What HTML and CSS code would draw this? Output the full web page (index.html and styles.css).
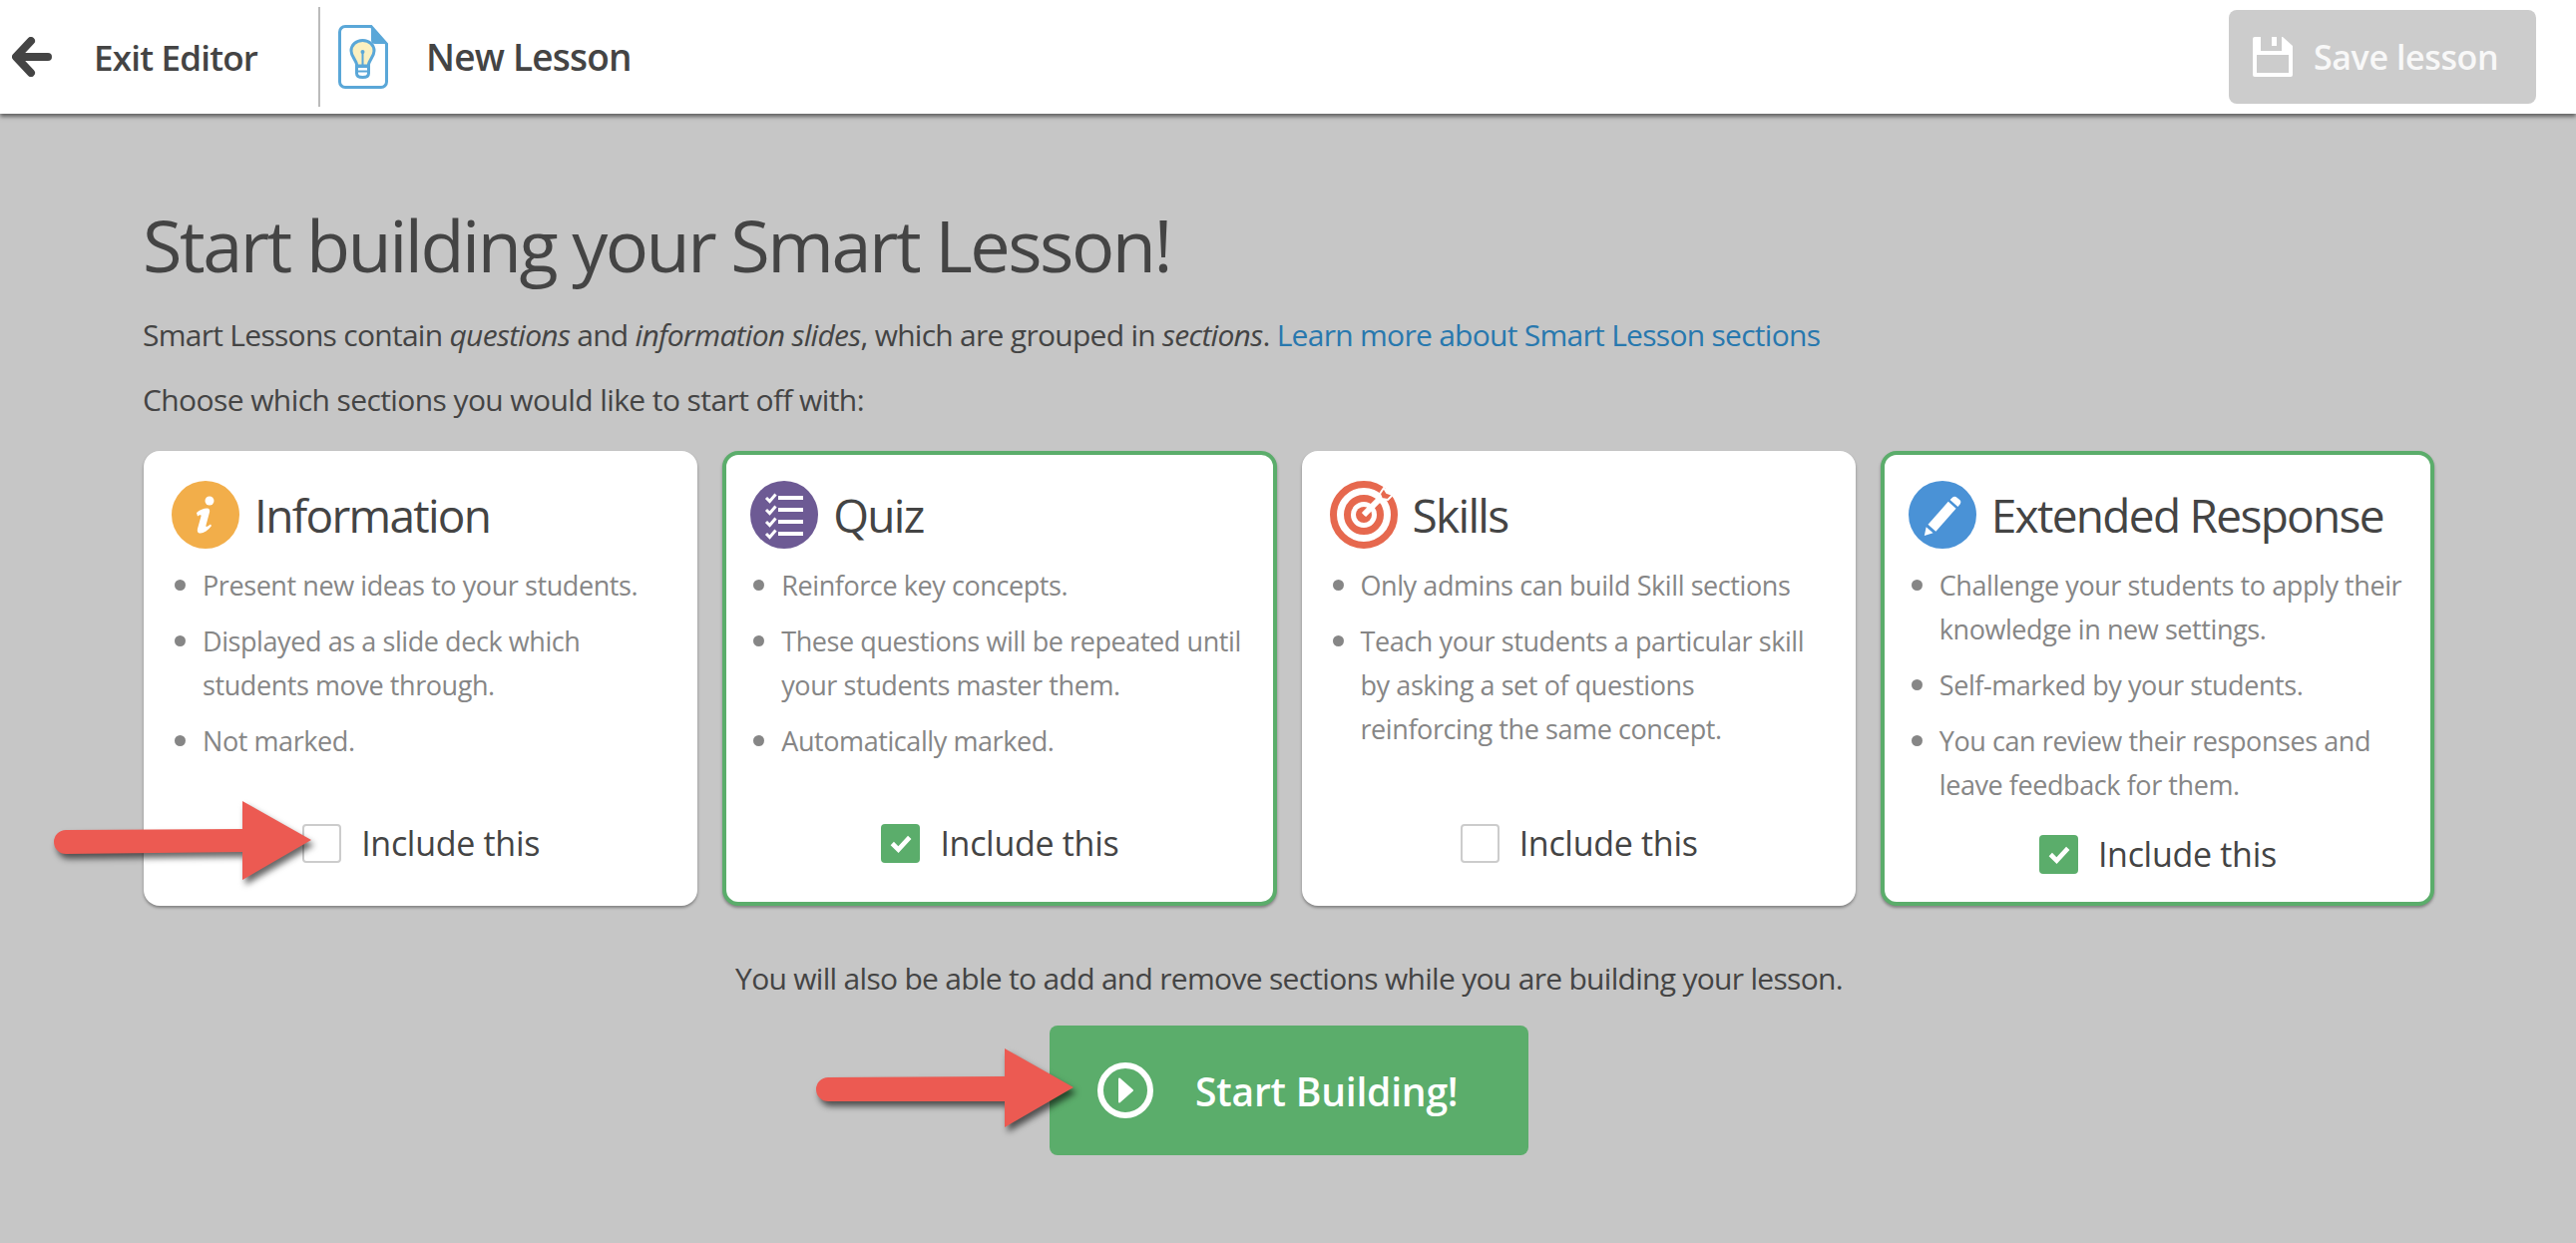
FILE: index.html
```html
<!DOCTYPE html>
<html lang="en">
<head>
    <meta charset="UTF-8">
    <title>New Lesson</title>
    <link rel="stylesheet" href="styles.css">
</head>
<body>
    <header class="topbar">
        <a class="exit-link" href="#">
            <svg class="exit-icon" viewBox="0 0 40 40"><path d="M19 4 4 20l15 16M5 20h31" fill="none" stroke="#444" stroke-width="8" stroke-linecap="round" stroke-linejoin="round"/></svg>
            <span>Exit Editor</span>
        </a>
        <div class="topbar-divider"></div>
        <svg class="doc-icon" viewBox="0 0 50 64">
            <path d="M7 1.500h26L48.500 19v38a5.500 5.500 0 0 1-5.500 5.500H7A5.500 5.500 0 0 1 1.500 57V7A5.500 5.500 0 0 1 7 1.500z" fill="#fff" stroke="#5aa7d8" stroke-width="3"/>
            <path d="M33 1.500 48.500 19H37a4 4 0 0 1-4-4z" fill="#5aa7d8"/>
            <path d="M24.500 15.500c-7 0-11.500 5-11.500 10.500 0 6 5 8.500 6 15h11c1-6.500 6-9 6-15 0-5.500-4.500-10.500-11.500-10.500z" fill="#fbf0c0" stroke="#5aa7d8" stroke-width="3"/>
            <path d="M24.500 27v14" stroke="#5aa7d8" stroke-width="2"/>
            <circle cx="24.500" cy="27" r="2" fill="#5aa7d8"/>
            <path d="M18.500 41.500h12v7c0 2.500-2.500 4-6 4s-6-1.500-6-4z" fill="#fff" stroke="#5aa7d8" stroke-width="3"/>
            <path d="M18.500 46.500h12" stroke="#5aa7d8" stroke-width="2"/>
        </svg>
        <h1 class="lesson-name">New Lesson</h1>
        <button class="save-btn" type="button">
            <svg class="save-icon" viewBox="0 0 40 40"><path fill-rule="evenodd" d="M2 0h28l10 9v29a2 2 0 0 1-2 2H2a2 2 0 0 1-2-2V2a2 2 0 0 1 2-2zm2 18v18h32V18zM8 0v14h21V0h-5v9h-5V0z" fill="#fff"/></svg>
            <span>Save lesson</span>
        </button>
    </header>

    <main class="content">
        <h2 class="page-title">Start building your Smart Lesson!</h2>
        <p class="intro">Smart Lessons contain <em>questions</em> and <em>information slides</em>, which are grouped in <em>sections</em>. <a href="#">Learn more about Smart Lesson sections</a></p>
        <p class="intro intro-choose">Choose which sections you would like to start off with:</p>

        <div class="cards">
            <section class="card">
                <div class="card-head">
                    <svg class="card-icon" viewBox="0 0 68 68">
                        <circle cx="34" cy="34" r="34" fill="#f2ae4a"/>
                        <circle cx="38" cy="20" r="4.500" fill="#fff"/>
                        <path d="M25 32c3-3 7-4.500 10.500-4.500 2.500 0 3 2 2.500 4l-3.500 13c-.5 2 1 2 4.500-1l1 1.500c-3 4.500-8 7.500-11 7.500-3 0-3.500-2-3-4.500l3.500-12.500c.5-2-1.500-1.500-3.500 0z" fill="#fff"/>
                    </svg>
                    <h3>Information</h3>
                </div>
                <ul class="card-points">
                    <li>Present new ideas to your students.</li>
                    <li>Displayed as a slide deck which students move through.</li>
                    <li>Not marked.</li>
                </ul>
                <label class="include">
                    <span class="checkbox"></span>
                    Include this
                </label>
            </section>

            <section class="card card-on">
                <div class="card-head">
                    <svg class="card-icon" viewBox="0 0 68 68">
                        <circle cx="34" cy="34" r="34" fill="#6d5a94"/>
                        <path d="M28 17h25M28 29h25M28 41h25M28 53h25" stroke="#fff" stroke-width="4" fill="none"/>
                        <path d="M16 17l3.500 3.500 6-7M16 29l3.500 3.500 6-7M16 41l3.500 3.500 6-7M16 53l3.500 3.500 6-7" stroke="#fff" stroke-width="3" fill="none"/>
                    </svg>
                    <h3>Quiz</h3>
                </div>
                <ul class="card-points">
                    <li>Reinforce key concepts.</li>
                    <li>These questions will be repeated until your students master them.</li>
                    <li>Automatically marked.</li>
                </ul>
                <label class="include">
                    <span class="checkbox checkbox-on">
                        <svg viewBox="0 0 38 38"><path d="M11 19l6 6 11-12" fill="none" stroke="#fff" stroke-width="4.500"/></svg>
                    </span>
                    Include this
                </label>
            </section>

            <section class="card">
                <div class="card-head">
                    <svg class="card-icon" viewBox="0 0 68 68">
                        <circle cx="34" cy="34" r="30.500" fill="none" stroke="#e6684e" stroke-width="7"/>
                        <circle cx="34" cy="34" r="16.500" fill="none" stroke="#e6684e" stroke-width="7"/>
                        <circle cx="34" cy="34" r="8" fill="#e6684e"/>
                        <path d="M34 34 60 8" stroke="#fff" stroke-width="6"/>
                        <path d="M34 34 50 18" stroke="#fff" stroke-width="4"/>
                        <path d="M50 13l4-6 3 5 6 2-5 5-6-1z" fill="#e6684e" stroke="#fff" stroke-width="2"/>
                    </svg>
                    <h3>Skills</h3>
                </div>
                <ul class="card-points">
                    <li>Only admins can build Skill sections</li>
                    <li>Teach your students a particular skill by asking a set of questions reinforcing the same concept.</li>
                </ul>
                <label class="include">
                    <span class="checkbox"></span>
                    Include this
                </label>
            </section>

            <section class="card card-on">
                <div class="card-head">
                    <svg class="card-icon" viewBox="0 0 68 68">
                        <circle cx="34" cy="34" r="34" fill="#4a92d6"/>
                        <g transform="translate(2.500 2) scale(.92)">
                            <path d="M45 16c1.500-1.500 3.500-1.500 5 0l3 2.500c1.500 1.500 1.500 3 .5 4.500l-2.500 3-8.500-7.500z" fill="#fff"/>
                            <path d="M40.500 20.500l8.500 7.500-22 25-8.500-7.500z" fill="#fff"/>
                            <path d="M16.500 48l7.500 6.500-9.500 3z" fill="#fff"/>
                        </g>
                    </svg>
                    <h3>Extended Response</h3>
                </div>
                <ul class="card-points">
                    <li>Challenge your students to apply their knowledge in new settings.</li>
                    <li>Self-marked by your students.</li>
                    <li>You can review their responses and leave feedback for them.</li>
                </ul>
                <label class="include">
                    <span class="checkbox checkbox-on">
                        <svg viewBox="0 0 38 38"><path d="M11 19l6 6 11-12" fill="none" stroke="#fff" stroke-width="4.500"/></svg>
                    </span>
                    Include this
                </label>
            </section>
        </div>

        <p class="note">You will also be able to add and remove sections while you are building your lesson.</p>

        <div class="start-row">
            <button class="start-btn" type="button">
                <svg class="play-icon" viewBox="0 0 56 56">
                    <circle cx="28" cy="28" r="25" fill="none" stroke="#fff" stroke-width="6"/>
                    <path d="M22 16.500 35 28 22 39.500z" fill="#fff" stroke="#fff" stroke-width="2" stroke-linejoin="round"/>
                </svg>
                <span>Start Building!</span>
            </button>
        </div>
    </main>

    <!-- annotation arrows sit on top of the screenshot -->
    <svg class="arrow arrow-include" viewBox="0 0 260 79"><path d="M12 29 189 28V0L258 39 189 79V51L12 53A12 12 0 0 1 12 29z" fill="#ec5a52"/></svg>
    <svg class="arrow arrow-start" viewBox="0 0 260 79"><path d="M12 29 189 28V0L258 39 189 79V53L12 53A12 12 0 0 1 12 29z" fill="#ec5a52"/></svg>
</body>
</html>
```

FILE: styles.css
```css
html, body {
    margin: 0;
    height: 100%;
}
body {
    position: relative;
    min-height: 1246px;
    background-color: #c6c6c6;
    color: #444;
    font-family: "Open Sans", sans-serif;
    overflow: hidden;
}
.topbar {
    display: flex;
    align-items: center;
    height: 114px;
    padding: 0 40px 0 12px;
    background-color: #fff;
    box-shadow: 0 3px 4px rgba(0, 0, 0, 0.5);
}
.exit-link {
    display: flex;
    align-items: center;
    gap: 42px;
    color: #444;
    text-decoration: none;
    font-size: 35px;
    font-weight: 600;
    letter-spacing: -0.8px;
}
.exit-icon {
    width: 40px;
    height: 40px;
    flex: none;
}
.topbar-divider {
    width: 2px;
    height: 100px;
    margin-left: 61px;
    background-color: #bbb;
}
.doc-icon {
    width: 50px;
    height: 64px;
    margin-left: 18px;
    flex: none;
}
.lesson-name {
    margin: 0 0 2px 38px;
    font-size: 37px;
    font-weight: 600;
    letter-spacing: -0.8px;
}
.save-btn {
    display: flex;
    align-items: center;
    gap: 21px;
    width: 308px;
    height: 94px;
    margin-left: auto;
    padding: 0 0 0 24px;
    border: 0;
    border-radius: 8px;
    background-color: #ccc;
    color: #f8f8f8;
    font-family: inherit;
    font-size: 34px;
    font-weight: 600;
    letter-spacing: -0.4px;
}
.save-icon {
    width: 40px;
    height: 40px;
}
.content {
    padding: 0 142px 0 144px;
}
.page-title {
    margin: 0 0 0 -1px;
    padding-top: 81px;
    font-size: 72px;
    line-height: 100px;
    font-weight: 400;
    letter-spacing: -2.5px;
}
.intro {
    margin: 19px 0 0 -1px;
    font-size: 30px;
    line-height: 44px;
    letter-spacing: -0.715px;
}
.intro-choose {
    margin-top: 21px;
    letter-spacing: -0.59px;
}
.intro a {
    color: #2878ae;
    text-decoration: none;
}
.cards {
    display: grid;
    grid-template-columns: repeat(4, 1fr);
    gap: 25px;
    height: 456px;
    margin-top: 29px;
}
.card {
    display: flex;
    flex-direction: column;
    box-sizing: border-box;
    padding: 30px 24px 0 28px;
    border-radius: 16px;
    background-color: #fff;
    box-shadow: 0 2px 3px rgba(0, 0, 0, 0.35);
}
.card-on {
    padding: 26px 20px 0 24px;
    border: 4px solid #5bad6b;
}
.card-head {
    display: flex;
    align-items: center;
    gap: 15px;
    height: 68px;
}
.card-head h3 {
    margin: 0;
    font-size: 46px;
    font-weight: 400;
    letter-spacing: -1.7px;
}
.card-icon {
    width: 68px;
    height: 68px;
    flex: none;
}
.card-points {
    box-sizing: border-box;
    min-height: 259px;
    margin: 0;
    padding: 14px 0 0 31px;
    color: #868686;
    font-size: 27px;
    line-height: 44px;
    letter-spacing: -0.42px;
}
.card-points li {
    margin-bottom: 11px;
}
.card-points li::marker {
    font-size: 30px;
}
.include {
    display: flex;
    align-items: center;
    justify-content: center;
    gap: 20px;
    margin-top: 13px;
    padding-right: 3px;
    font-size: 34px;
    letter-spacing: -0.3px;
}
.checkbox {
    display: block;
    box-sizing: border-box;
    width: 39px;
    height: 39px;
    border: 2px solid #ccc;
    border-radius: 4px;
}
.checkbox-on {
    border: 0;
    background-color: #5bad6b;
}
.checkbox-on svg {
    display: block;
}
.note {
    margin: 51px 0 0;
    text-align: center;
    font-size: 30px;
    line-height: 44px;
    letter-spacing: -0.7px;
}
.start-row {
    display: flex;
    justify-content: center;
    margin-top: 25px;
}
.start-btn {
    display: flex;
    align-items: center;
    gap: 42px;
    width: 480px;
    height: 130px;
    padding: 0 0 0 48px;
    border: 0;
    border-radius: 8px;
    background-color: #5bad6b;
    color: #fff;
    font-family: inherit;
    font-size: 39px;
    font-weight: 600;
    letter-spacing: -0.2px;
}
.play-icon {
    width: 56px;
    height: 56px;
}
.arrow {
    position: absolute;
    width: 260px;
    height: 79px;
    filter: drop-shadow(3px 5px 3px rgba(0, 0, 0, 0.6));
}
.arrow-include {
    left: 54px;
    top: 803px;
}
.arrow-start {
    left: 818px;
    top: 1051px;
}
```
